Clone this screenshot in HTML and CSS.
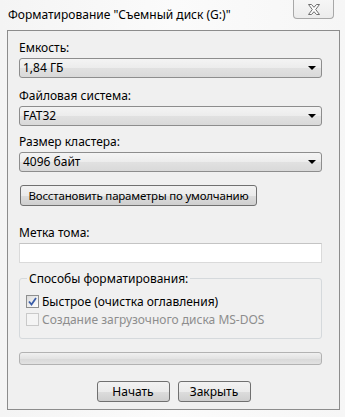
FILE: index.html
```html
<!DOCTYPE html>
<html lang="ru">
<head>
<meta charset="utf-8">
<link rel="stylesheet" href="styles.css">
</head>
<body>
<div class="window">
  <div class="titlebar">
    <div class="title">Форматирование "Съемный диск (G:)"</div>
    <div class="close">
      <svg width="14" height="11" viewBox="0 0 14 11"><path d="M1.5 0.5 H4.5 L7 3.3 L9.5 0.5 H12.5 L8.7 5.5 L12.5 10.5 H9.5 L7 7.7 L4.5 10.5 H1.5 L5.3 5.5 Z" fill="#fdfdfd" stroke="#6f6f6f" stroke-width="1" stroke-linejoin="round"/></svg>
    </div>
  </div>
  <div class="client">
    <div class="label first">Емкость:</div>
    <div class="combo"><span>1,84 ГБ</span><i class="arrow"></i></div>
    <div class="label">Файловая система:</div>
    <div class="combo"><span>FAT32</span><i class="arrow"></i></div>
    <div class="label third">Размер кластера:</div>
    <div class="combo"><span>4096 байт</span><i class="arrow"></i></div>
    <button class="btn restore">Восстановить параметры по умолчанию</button>
    <div class="label vol">Метка тома:</div>
    <div class="input"></div>
    <fieldset class="group">
      <legend>Способы форматирования:</legend>
      <div class="check"><span class="box checked"><svg width="9" height="9" viewBox="0 0 9 9"><path d="M1 4.5 L3.5 7.5 L8 1" fill="none" stroke="#3a5da8" stroke-width="1.8"/></svg></span>Быстрое (очистка оглавления)</div>
      <div class="check disabled"><span class="box"></span>Создание загрузочного диска MS-DOS</div>
    </fieldset>
    <div class="progress"></div>
    <div class="actions">
      <button class="btn action">Начать</button>
      <button class="btn action">Закрыть</button>
    </div>
  </div>
</div>
</body>
</html>
```
FILE: styles.css
```css
html, body {
  margin: 0;
  padding: 0;
}
body {
  width: 345px;
  height: 417px;
  overflow: hidden;
  font-family: "Noto Sans", "Open Sans", sans-serif;
  font-size: 12px;
  color: #000;
  background: linear-gradient(90deg, #f4f4f4 0%, #fbfbfb 50%, #f6f6f6 100%);
}
.window {
  width: 345px;
  height: 417px;
  display: flex;
  flex-direction: column;
}
.titlebar {
  height: 30px;
  display: flex;
  align-items: flex-start;
  justify-content: space-between;
}
.title {
  margin: 7px 0 0 8px;
  line-height: 16px;
  font-size: 12px;
  color: #000;
}
.close {
  width: 41px;
  height: 19px;
  margin-right: 11px;
  box-sizing: border-box;
  border: 1px solid #a8a8a8;
  border-top: none;
  border-radius: 0 0 4px 4px;
  background: linear-gradient(#f6f6f6, #ececec);
  display: flex;
  align-items: center;
  justify-content: center;
}
.client {
  margin: 0 5px 0 7px;
  height: 380px;
  box-sizing: border-box;
  border: 1px solid #8c8c8c;
  background: #f0f0f0;
  padding: 9px 17px 0 11px;
  display: flex;
  flex-direction: column;
}
.label {
  line-height: 15px;
  margin-top: 10px;
  margin-bottom: 3px;
  white-space: nowrap;
}
.label.first {
  margin-top: 0;
}
.label.third {
  margin-top: 8px;
}
.combo {
  height: 20px;
  box-sizing: border-box;
  border: 1px solid #8d8d8d;
  border-radius: 3px;
  background: linear-gradient(#f4f4f4 0%, #ececec 50%, #e1e1e1 51%, #d9d9d9 100%);
  display: flex;
  align-items: center;
  justify-content: space-between;
  padding: 0 5px 0 3px;
  line-height: 16px;
}
.arrow {
  width: 0;
  height: 0;
  border-left: 4px solid transparent;
  border-right: 4px solid transparent;
  border-top: 4px solid #000;
}
.btn {
  font: inherit;
  color: #000;
  height: 21px;
  box-sizing: border-box;
  border: 1px solid #707070;
  border-radius: 3px;
  background: linear-gradient(#f2f2f2 0%, #ebebeb 50%, #dddddd 51%, #cfcfcf 100%);
  padding: 0;
  line-height: 17px;
  white-space: nowrap;
}
.restore {
  width: 237px;
  margin: 13px 0 0 1px;
  font-size: 11.5px;
  letter-spacing: -0.2px;
}
.label.vol {
  margin-top: 19px;
}
.input {
  height: 20px;
  box-sizing: border-box;
  border: 1px solid #dadada;
  border-top-color: #c4c4c4;
  background: #fff;
}
.group {
  margin: 8px 0 0 0;
  padding: 6px 0 0 6px;
  border: 1px solid #d5d9dc;
  border-radius: 3px;
  height: 68px;
  box-sizing: border-box;
}
.group legend {
  padding: 0 2px;
  margin-left: 1px;
  line-height: 15px;
}
.check {
  display: flex;
  align-items: center;
  line-height: 15px;
  height: 18px;
  white-space: nowrap;
}
.box {
  width: 13px;
  height: 13px;
  box-sizing: border-box;
  border: 1px solid #8e8f8f;
  background: linear-gradient(135deg, #dcdcdc, #ffffff);
  margin-right: 3px;
  display: flex;
  align-items: center;
  justify-content: center;
}
.check.disabled {
  color: #8d8d8d;
}
.check.disabled .box {
  border-color: #c9c9c9;
  background: #f4f4f4;
}
.progress {
  margin-top: 13px;
  height: 13px;
  box-sizing: border-box;
  border: 1px solid #b2b2b2;
  border-radius: 3px;
  background: linear-gradient(#f0f0f0, #e3e3e3 50%, #d8d8d8 51%, #e2e2e2);
}
.actions {
  display: flex;
  justify-content: center;
  gap: 8px;
  margin-top: 16px;
  padding-left: 6px;
}
.action {
  width: 73px;
}
```
